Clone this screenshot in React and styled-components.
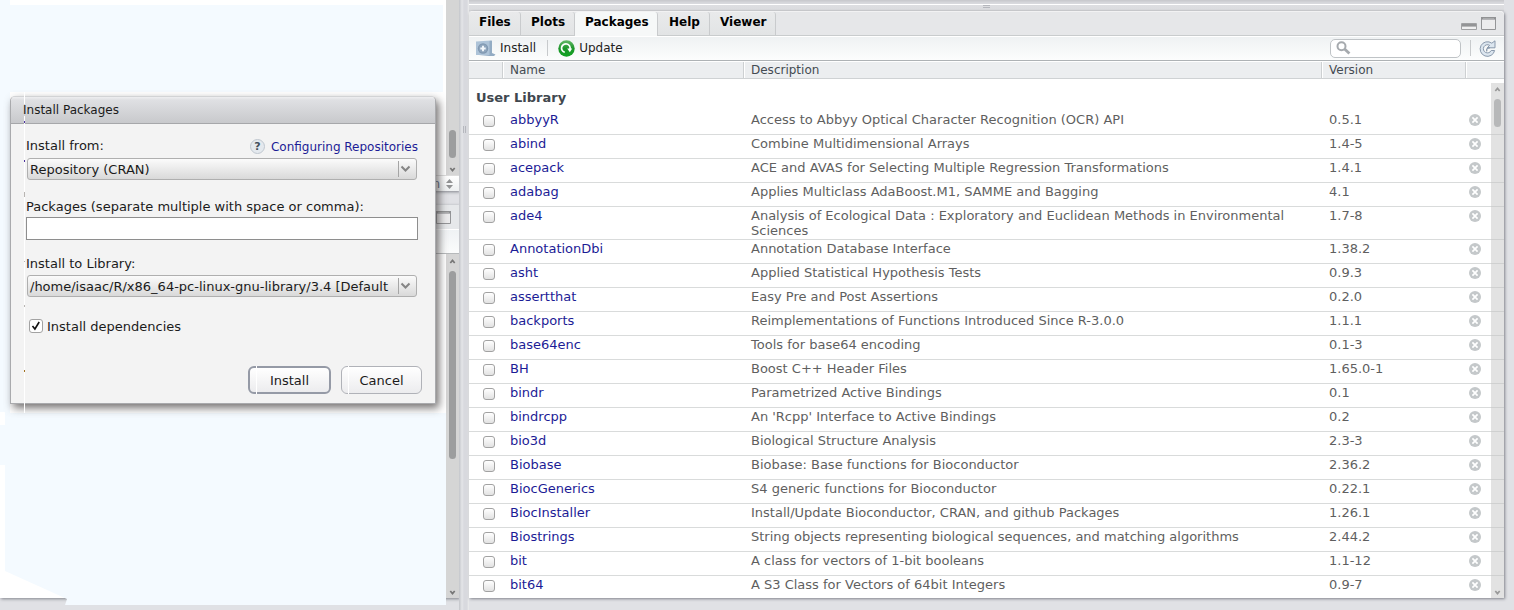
import React from "react";
import styled, { createGlobalStyle, css } from "styled-components";

const Global = createGlobalStyle`
  *, *::before, *::after { box-sizing: border-box; }
  html, body { margin: 0; padding: 0; }
  body { overflow: hidden; background: #e0e1e5; font-family: "DejaVu Sans", sans-serif; font-size: 13px; color: #222; }
`;

const Workbench = styled.div`
  position: relative;
  display: flex;
  width: 1514px;
  height: 610px;
  overflow: hidden;
  background: #e0e1e5;
`;

const LeftColumn = styled.div`
  display: flex;
  flex-direction: column;
  width: 459px;
  height: 598px;
`;

const Pane = styled.section`
  display: flex;
  flex-direction: column;
  height: ${(p) => p.$h}px;
  margin-top: ${(p) => p.$gap || 0}px;
  background: #fff;
  box-shadow: 1px 1px 3px rgba(80, 82, 92, 0.65);
`;

const PaneBody = styled.div`
  flex: 1;
  min-height: 0;
  display: flex;
  justify-content: flex-end;
`;

const Track = styled.div`
  display: flex;
  flex-direction: column;
  align-items: center;
  width: 13px;
  background: ${(p) => p.$bg || "#d5d5d5"};
  padding: ${(p) => p.$pad || "0"};
`;

const Thumb = styled.div`
  width: 7px;
  height: ${(p) => p.$h}px;
  border-radius: 4px;
  background: ${(p) => p.$bg || "#9c9d9e"};
`;

const Spacer = styled.div`
  flex: ${(p) => (p.$h ? `0 0 ${p.$h}px` : "1")};
`;

const StatusBar = styled.div`
  display: flex;
  align-items: center;
  justify-content: flex-end;
  gap: 6px;
  height: 16px;
  padding: 0 6px 0 0;
  border-top: 1px solid #ddd;
  background: linear-gradient(#fff, #eef0f1);
  font-size: 12px;
  color: #53637a;
`;

const LowerTabs = styled.div`
  display: flex;
  align-items: center;
  justify-content: flex-end;
  height: 25px;
  padding-right: 8px;
  background: #e6e8ea;
  border-bottom: 1px solid #fff;
`;

const LowerTools = styled.div`
  height: 24px;
  background: linear-gradient(#eff2f4, #fbfcfc);
  border-bottom: 1px solid #b6b9bb;
`;

const Gutter = styled.div`
  display: flex;
  justify-content: center;
  width: 10px;
  height: 610px;
  padding-top: 126px;
  background: linear-gradient(90deg, #c3c5ca 0, #e4e5e8 3px, #d8d9de 5px, #d8d9de 8px, #eceded 10px);
`;

const Grip = styled.div`
  width: ${(p) => (p.$wide ? 7 : 3)}px;
  height: ${(p) => (p.$wide ? 3 : 7)}px;
  border: solid #b5b7bd;
  border-width: ${(p) => (p.$wide ? "1px 0" : "0 1px")};
`;

const RightColumn = styled.div`
  width: 1035px;
  height: 610px;
  display: flex;
  flex-direction: column;
`;

const UpperEdge = styled.div`
  height: 11px;
  display: flex;
  justify-content: center;
  padding-top: 5px;
  background: linear-gradient(#c6c7cb 0, #d8d9dd 3px, #d8d9dd 4px, #fff 4px, #fff 5px, #dddee1 5px, #dbdcdf 10px, #c9cacd 11px);
`;

const PackagesPane = styled.section`
  position: relative;
  display: flex;
  flex-direction: column;
  height: 587px;
  background: #fff;
  border-radius: 4px 4px 0 0;
  box-shadow: 1px 1px 3px rgba(80, 82, 92, 0.65);
`;

const TabStrip = styled.div`
  display: flex;
  height: 25px;
  background: #e6e7e9;
  border-top: 1px solid #f2f2f3;
  border-bottom: 1px solid #c9cccd;
  border-radius: 4px 4px 0 0;
`;

const Tab = styled.div`
  width: ${(p) => p.$w}px;
  height: ${(p) => (p.$active ? 25 : 23)}px;
  padding-left: ${(p) => p.$indent}px;
  font-size: 12px;
  font-weight: bold;
  line-height: 20px;
  color: #000;
  border-right: 1px solid #c9cbcd;
  border-radius: 3px 3px 0 0;
  background: ${(p) => (p.$active ? "#f6f8f8" : "linear-gradient(#e9eaeb, #e2e4e5)")};
`;

const WindowTools = styled.div`
  display: flex;
  gap: 4px;
  margin-left: auto;
  padding: 5px 8px 0 0;
`;

const Toolbar = styled.div`
  display: flex;
  align-items: center;
  height: 25px;
  padding: 0 8px 1px 7px;
  border-top: 1px solid #fff;
  border-bottom: 1px solid #aeb2b5;
  background: linear-gradient(#eff2f3, #fcfdfd);
  font-size: 12px;
  color: #222;
`;

const ToolButton = styled.div`
  display: flex;
  align-items: center;
  gap: ${(p) => p.$gap}px;
`;

const Divider = styled.div`
  width: 1px;
  height: 16px;
  margin: 0 ${(p) => p.$right}px 0 ${(p) => p.$left}px;
  background: #c7cacc;
`;

const Search = styled.div`
  display: flex;
  align-items: center;
  width: 131px;
  height: 19px;
  margin-left: auto;
  padding-left: 5px;
  border: 1px solid #bfc3c6;
  border-radius: 5px;
  background: #fff;
`;

const grid = css`
  display: grid;
  grid-template-columns: 34px 241px 578px 144px 38px;
`;

const HeaderRow = styled.div`
  ${grid}
  height: 18px;
  background: #eceef0;
  border-top: 1px solid #fff;
  border-bottom: 1px solid #cfd2d4;
  font-size: 12px;
  line-height: 16px;
  color: #444b52;
`;

const HeaderCell = styled.div`
  padding-left: 7px;
  border-right: 1px solid #cdd0d2;
  box-shadow: 1px 0 #fff;
  &:last-child { border: 0; box-shadow: none; }
`;

const List = styled.div`
  flex: 1;
  overflow: hidden;
`;

const GroupTitle = styled.div`
  height: 32px;
  padding: 11px 0 0 7px;
  font-weight: bold;
  line-height: 15px;
  color: #40474e;
`;

const Row = styled.div`
  ${grid}
  min-height: 24px;
  border-bottom: 1px solid #d9dbdb;
  line-height: 15px;
`;

const Cell = styled.div`
  padding: 1px 0 1px 7px;
  color: ${(p) => (p.$link ? "#1c1c96" : "#5f5f5f")};
  white-space: pre-line;
`;

const Check = styled.div`
  display: flex;
  align-items: center;
  justify-content: center;
  width: ${(p) => p.$size}px;
  height: ${(p) => p.$size}px;
  border: 1px solid #a2a2a2;
  border-radius: 3px;
  background: ${(p) => (p.$on ? "#fff" : "linear-gradient(#fff, #e2e2e2)")};
`;

const CheckCell = styled.div`
  padding: 4px 0 0 14px;
`;

const RemoveCell = styled.div`
  padding: 3px 0 0 3px;
  line-height: 0;
`;

const ListScroll = styled.div`
  position: absolute;
  right: 0;
  top: 72px;
  bottom: 0;
  display: flex;
`;

const PaintedArea = styled.svg`
  position: absolute;
  left: 0;
  top: 0;
`;

const Dialog = styled.div`
  position: absolute;
  left: 10px;
  top: 96px;
  width: 426px;
  height: 308px;
  background: #f3f3f3;
  border: 1px solid #a9aaad;
  border-top-color: #d2d3d5;
  border-radius: 5px 5px 0 0;
  box-shadow: 3px 4px 8px rgba(70, 66, 66, 0.75);
  color: #1b1b1b;
`;

const DialogTitle = styled.div`
  height: 27px;
  padding-left: 12px;
  border-bottom: 1px solid #a6a7aa;
  border-radius: 4px 4px 0 0;
  background: linear-gradient(#eeeef0 0, #dfe0e3 3px, #c8c9cc);
  font-size: 12px;
  line-height: 26px;
`;

const DialogBody = styled.div`
  display: flex;
  flex-direction: column;
  height: 279px;
  padding: 13px 17px 0 15px;
`;

const LabelRow = styled.div`
  display: flex;
  align-items: center;
  justify-content: space-between;
  height: 17px;
  margin-top: ${(p) => p.$top || 0}px;
`;

const HelpLink = styled.div`
  display: flex;
  align-items: center;
  gap: 6px;
  padding-top: 2px;
  font-size: 12px;
  color: #1c1c96;
`;

const HelpBadge = styled.span`
  width: 15px;
  height: 15px;
  border: 1px solid #c0c7cf;
  border-radius: 50%;
  background: #e4e9ee;
  font-size: 11px;
  font-weight: bold;
  line-height: 13px;
  text-align: center;
  color: #44505c;
`;

const Select = styled.div`
  display: flex;
  align-items: center;
  width: 390px;
  height: 22px;
  margin: ${(p) => p.$top}px 0 0 1px;
  border: 1px solid #afafaf;
  border-radius: 3px;
  background: linear-gradient(#fbfbfb, #d9d9d9);
`;

const SelectText = styled.span`
  flex: 1;
  padding-left: 2px;
  white-space: nowrap;
`;

const SelectArrow = styled.div`
  display: flex;
  align-items: center;
  padding-left: 1px;
  width: 18px;
  height: 16px;
  border-left: 1px solid #a5a5a5;
`;

const Input = styled.div`
  height: 23px;
  margin-top: 2px;
  border: 1px solid #8e8e8e;
  background: #fff;
`;

const CheckRow = styled.div`
  display: flex;
  align-items: center;
  gap: 4px;
  height: 16px;
  margin: 21px 0 0 3px;
`;

const Buttons = styled.div`
  display: flex;
  justify-content: flex-end;
  gap: 10px;
  margin: 32px -4px 0 0;
`;

const Button = styled.div`
  width: ${(p) => (p.$primary ? 83 : 81)}px;
  height: 28px;
  border: ${(p) => (p.$primary ? "2px solid #959aa6" : "1px solid #b0b2b8")};
  border-radius: 6px;
  background: linear-gradient(#fff, #ececee);
  line-height: ${(p) => (p.$primary ? 25 : 27)}px;
  text-align: center;
  background-clip: padding-box;
`;

const Arrow = ({ up, color = "#777" }) => (
  <svg width="7" height="5" viewBox="0 0 7 5">
    <path d={up ? "M1.3 4 3.5 1.4 5.7 4" : "M1.3 1 3.5 3.6 5.7 1"} fill="none" stroke={color} strokeWidth="1.7" />
  </svg>
);

const Chevron = () => (
  <svg width="11" height="8">
    <path d="m1.5 1.5 4 4 4-4" fill="none" stroke="#858585" strokeWidth="2" />
  </svg>
);

const Maximize = () => (
  <svg width="15" height="13" viewBox="0 0 15 13">
    <path d="M.5.5h14v12H.5z" fill="#ececed" stroke="#949597" />
    <path d="M0 0h15v2.6H0z" fill="#919294" />
    <path d="M2 1.5h11" stroke="#bcbdbe" strokeWidth=".6" />
  </svg>
);

const Minimize = () => (
  <svg width="16" height="13" viewBox="0 0 16 13">
    <path d="M.5 6.5h15v6H.5z" fill="#efeff0" stroke="#a0a1a3" />
    <path d="M1 7h14v2.6H1z" fill="#939496" />
  </svg>
);

const PackageIcon = () => (
  <svg width="20" height="17" viewBox="0 0 20 17">
    <path d="M0 1.5 15 .5V15H0z" fill="#adc3d8" />
    <path d="m13.5 1 2.5-.5V13l3.5 1.5L18 16H3l10.5-1z" fill="#93acc4" />
    <circle cx="7" cy="8.5" r="5.2" fill="#8098b1" />
    <circle cx="7" cy="8.5" r="4" fill="#8ea5bd" />
    <path d="M7 5.8v5.4M4.3 8.5h5.4" stroke="#f2f7fb" strokeWidth="1.9" />
  </svg>
);

const UpdateIcon = () => (
  <svg width="17" height="17" viewBox="0 0 17 17">
    <defs>
      <linearGradient id="green" x2="0" y2="1">
        <stop stopColor="#65b868" />
        <stop offset=".5" stopColor="#1d962b" />
        <stop offset="1" stopColor="#10a321" />
      </linearGradient>
    </defs>
    <circle cx="8.5" cy="8.5" r="8.2" fill="url(#green)" />
    <path d="M6.8 12.3A4.3 4.3 0 1 1 12 9.2" fill="none" stroke="#fff" strokeWidth="1.7" />
    <path d="M9.2 8.6h5l-2.4 3.6z" fill="#fff" />
  </svg>
);

const SearchIcon = () => (
  <svg width="15" height="14" viewBox="0 0 15 14">
    <circle cx="5.5" cy="5.2" r="4" fill="none" stroke="#a6aaae" strokeWidth="2" />
    <path d="m8.6 8 4.8 4.5" stroke="#a6aaae" strokeWidth="2.8" />
  </svg>
);

const RefreshIcon = () => (
  <svg width="17" height="17" viewBox="0 0 17 17">
    <path d="M12.8 3.2A7.3 7.3 0 1 0 15.6 10.5H12.2A4.1 4.1 0 1 1 10.6 5.3L8.3 7.8H16V.8z" fill="#dce6ef" stroke="#8999ac" strokeWidth="1" />
    <path d="M8 11.3c-1.2-2 .6-4 3-3.4" fill="none" stroke="#8999ac" strokeWidth="1.3" />
  </svg>
);

const RemoveIcon = () => (
  <svg width="12" height="12" viewBox="0 0 12 12">
    <circle cx="6" cy="6" r="6" fill="#c4c8ca" />
    <path d="m3.4 3.4 5.2 5.2m0-5.2L3.4 8.6" stroke="#fff" strokeWidth="1.7" />
  </svg>
);

const packages = [
  ["abbyyR", "Access to Abbyy Optical Character Recognition (OCR) API", "0.5.1"],
  ["abind", "Combine Multidimensional Arrays", "1.4-5"],
  ["acepack", "ACE and AVAS for Selecting Multiple Regression Transformations", "1.4.1"],
  ["adabag", "Applies Multiclass AdaBoost.M1, SAMME and Bagging", "4.1"],
  ["ade4", "Analysis of Ecological Data : Exploratory and Euclidean Methods in Environmental\nSciences", "1.7-8"],
  ["AnnotationDbi", "Annotation Database Interface", "1.38.2"],
  ["asht", "Applied Statistical Hypothesis Tests", "0.9.3"],
  ["assertthat", "Easy Pre and Post Assertions", "0.2.0"],
  ["backports", "Reimplementations of Functions Introduced Since R-3.0.0", "1.1.1"],
  ["base64enc", "Tools for base64 encoding", "0.1-3"],
  ["BH", "Boost C++ Header Files", "1.65.0-1"],
  ["bindr", "Parametrized Active Bindings", "0.1"],
  ["bindrcpp", "An 'Rcpp' Interface to Active Bindings", "0.2"],
  ["bio3d", "Biological Structure Analysis", "2.3-3"],
  ["Biobase", "Biobase: Base functions for Bioconductor", "2.36.2"],
  ["BiocGenerics", "S4 generic functions for Bioconductor", "0.22.1"],
  ["BiocInstaller", "Install/Update Bioconductor, CRAN, and github Packages", "1.26.1"],
  ["Biostrings", "String objects representing biological sequences, and matching algorithms", "2.44.2"],
  ["bit", "A class for vectors of 1-bit booleans", "1.1-12"],
  ["bit64", "A S3 Class for Vectors of 64bit Integers", "0.9-7"],
];

const tabs = [["Files", 52, 10], ["Plots", 54, 10], ["Packages", 83, 10], ["Help", 52, 11], ["Viewer", 66, 10]];

function InstallDialog() {
  return (
    <Dialog>
      <DialogTitle>Install Packages</DialogTitle>
      <DialogBody>
        <LabelRow>
          <span>Install from:</span>
          <HelpLink><HelpBadge>?</HelpBadge>Configuring Repositories</HelpLink>
        </LabelRow>
        <Select $top={4}>
          <SelectText>Repository (CRAN)</SelectText>
          <SelectArrow><Chevron /></SelectArrow>
        </Select>
        <LabelRow $top={18}>Packages (separate multiple with space or comma):</LabelRow>
        <Input />
        <LabelRow $top={15}>Install to Library:</LabelRow>
        <Select $top={3}>
          <SelectText>/home/isaac/R/x86_64-pc-linux-gnu-library/3.4 [Default</SelectText>
          <SelectArrow><Chevron /></SelectArrow>
        </Select>
        <CheckRow>
          <Check $size={14} $on>
            <svg width="10" height="10"><path d="m1.5 5 2.4 3L8.2 1" fill="none" stroke="#111" strokeWidth="1.6" /></svg>
          </Check>
          Install dependencies
        </CheckRow>
        <Buttons>
          <Button $primary>Install</Button>
          <Button>Cancel</Button>
        </Buttons>
      </DialogBody>
    </Dialog>
  );
}

export default function App() {
  return (
    <Workbench>
      <Global />
      <LeftColumn>
        <Pane $h={191}>
          <PaneBody>
            <Track $pad="0 0 3px"><Spacer /><Thumb $h={28} /><Spacer $h={9} /><Arrow /></Track>
          </PaneBody>
          <StatusBar>
            <span>n</span>
            <svg width="7" height="10"><path d="M0 4 3.5 0 7 4zM0 6h7l-3.5 4z" fill="#929394" /></svg>
          </StatusBar>
        </Pane>
        <Pane $h={393} $gap={14}>
          <LowerTabs><Maximize /></LowerTabs>
          <LowerTools />
          <PaneBody>
            <Track $pad="5px 0 3px"><Arrow up /><Spacer $h={7} /><Thumb $h={188} /><Spacer /><Arrow /></Track>
          </PaneBody>
        </Pane>
      </LeftColumn>
      <Gutter><Grip /></Gutter>
      <RightColumn>
        <UpperEdge><Grip $wide /></UpperEdge>
        <PackagesPane>
          <TabStrip>
            {tabs.map(([name, width, indent]) => (
              <Tab key={name} $w={width} $indent={indent} $active={name === "Packages"}>{name}</Tab>
            ))}
            <WindowTools><Minimize /><Maximize /></WindowTools>
          </TabStrip>
          <Toolbar>
            <ToolButton $gap={4}><PackageIcon />Install</ToolButton>
            <Divider $left={11} $right={10} />
            <ToolButton $gap={4}><UpdateIcon />Update</ToolButton>
            <Search><SearchIcon /></Search>
            <Divider $left={9} $right={8} />
            <RefreshIcon />
          </Toolbar>
          <HeaderRow>
            <HeaderCell /><HeaderCell>Name</HeaderCell><HeaderCell>Description</HeaderCell><HeaderCell>Version</HeaderCell><HeaderCell />
          </HeaderRow>
          <List>
            <GroupTitle>User Library</GroupTitle>
            {packages.map(([name, description, version]) => (
              <Row key={name}>
                <CheckCell><Check $size={12} /></CheckCell>
                <Cell $link>{name}</Cell>
                <Cell>{description}</Cell>
                <Cell>{version}</Cell>
                <RemoveCell><RemoveIcon /></RemoveCell>
              </Row>
            ))}
          </List>
          <ListScroll>
            <Track $bg="rgba(198,198,198,.5)" $pad="4px 0 3px">
              <Arrow up color="#999" /><Spacer $h={7} /><Thumb $h={28} $bg="#b7b8b9" /><Spacer /><Arrow color="#999" />
            </Track>
          </ListScroll>
        </PackagesPane>
      </RightColumn>
      <PaintedArea width="459" height="610">
        <path d="M0 0h10v5h433v87H10v321h436v192H65l2-6L5 571V465H0v-40h5v-13H0z" fill="#f4faff" />
      </PaintedArea>
      <InstallDialog />
      <PaintedArea width="459" height="610">
        <path d="M24.5 92v12M24.5 116v297M256.5 366v28M348.5 366v28" stroke="#fff" />
        <path d="M24 121h1v2h-1zM24 160h1v2h-1z" fill="#4c319f" />
        <path d="M24 192h1v5h-1zM24 261h1v1h-1zM24 305h1v2h-1z" fill="#b8b5b2" />
        <path d="M24 370h1v2h-1z" fill="#a17020" />
      </PaintedArea>
    </Workbench>
  );
}
